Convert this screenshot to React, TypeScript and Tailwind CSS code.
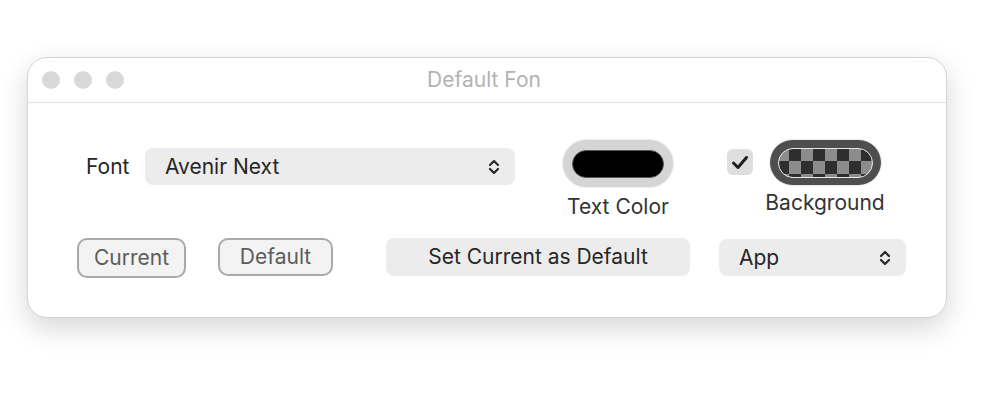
import React from 'react'

// Up/down chevron used by the macOS popup buttons
function Chevrons() {
  return (
    <svg width="12" height="18" viewBox="0 0 12 18" fill="none" className="shrink-0">
      <path d="M2 7 L6 3 L10 7" stroke="#2b2b2b" strokeWidth="2.2" strokeLinecap="round" strokeLinejoin="round" />
      <path d="M2 11 L6 15 L10 11" stroke="#2b2b2b" strokeWidth="2.2" strokeLinecap="round" strokeLinejoin="round" />
    </svg>
  )
}

function Popup({ label, className }: { label: string; className: string }) {
  return (
    <div
      className={`flex items-center justify-between rounded-[8px] bg-[#ececec] pl-[20px] pr-[15px] text-[21px] text-[#262626] ${className}`}
    >
      <span>{label}</span>
      <Chevrons />
    </div>
  )
}

function TrafficLights() {
  return (
    <div className="flex gap-[14px]">
      <span className="h-[18px] w-[18px] rounded-full bg-[#d9d9d9]" />
      <span className="h-[18px] w-[18px] rounded-full bg-[#d9d9d9]" />
      <span className="h-[18px] w-[18px] rounded-full bg-[#d9d9d9]" />
    </div>
  )
}

export default function App() {
  return (
    <div className="min-h-[400px] bg-white pt-[57px] pl-[27px] font-['Inter',sans-serif]">
      <div className="flex h-[261px] w-[920px] flex-col rounded-[20px] border border-[#d4d4d4] bg-white shadow-[0_10px_28px_rgba(0,0,0,0.16)]">
        {/* title bar */}
        <div className="relative flex h-[45px] shrink-0 items-center border-b border-[#e4e4e4] pl-[14px]">
          <TrafficLights />
          <div className="absolute inset-0 flex items-center justify-center pr-[6px] text-[21px] text-[#b3b3b3]">
            Default Fon
          </div>
        </div>

        {/* first row */}
        <div className="flex h-[135px] shrink-0 items-start pt-[37px] pl-[58px]">
          <div className="mt-[8px] flex h-[37px] items-center">
            <span className="w-[59px] text-[21px] text-[#262626]">Font</span>
            <Popup label="Avenir Next" className="h-[37px] w-[370px]" />
          </div>

          <div className="ml-[48px] flex w-[110px] flex-col items-center">
            <div className="flex h-[47px] w-[110px] items-center justify-center rounded-full bg-[#d5d5d5] shadow-[0_0_0_1px_#ececec]">
              <div className="h-[28px] w-[92px] rounded-full border border-[#5a5a5a] bg-black" />
            </div>
            <span className="mt-[9px] text-[21px] leading-[22px] text-[#333333] whitespace-nowrap">Text Color</span>
          </div>

          <div className="mt-[9px] ml-[54px] flex h-[26px] w-[26px] items-center justify-center rounded-[6px] bg-[#dedede]">
            <svg width="20" height="17" viewBox="0 0 20 17" fill="none">
              <path d="M3.5 9 L8 13.5 L16.5 3.5" stroke="#1f1f1f" strokeWidth="3" strokeLinecap="round" strokeLinejoin="round" />
            </svg>
          </div>

          <div className="ml-[13px] flex w-[118px] flex-col items-center">
            <div className="flex h-[45px] w-[111px] items-center justify-center rounded-full bg-[#4e4e4e] shadow-[0_0_0_1px_#ececec]">
              <div className="h-[30px] w-[95px] rounded-full border-[1.5px] border-[#e8e8e8] bg-[#8c8c8c] bg-[conic-gradient(#2e2e2e_25%,#8c8c8c_0_50%,#2e2e2e_0_75%,#8c8c8c_0)] bg-[length:24px_26px] bg-[position:-2px_-1px]" />
            </div>
            <span className="mt-[7px] text-[21px] leading-[22px] text-[#333333] whitespace-nowrap">Background</span>
          </div>
        </div>

        {/* second row */}
        <div className="flex items-start pl-[49px]">
          <button className="flex h-[40px] w-[109px] items-center justify-center rounded-[10px] border-2 border-[#a9a9a9] bg-[#f3f3f3] text-[21px] text-[#5c5c5c]">
            Current
          </button>
          <button className="ml-[32px] flex h-[38px] w-[115px] items-center justify-center rounded-[10px] border-2 border-[#a9a9a9] bg-[#f3f3f3] text-[21px] text-[#5c5c5c]">
            Default
          </button>
          <button className="ml-[53px] flex h-[38px] w-[304px] items-center justify-center rounded-[8px] bg-[#ececec] text-[21px] text-[#262626]">
            Set Current as Default
          </button>
          <Popup label="App" className="mt-[1px] ml-[29px] h-[37px] w-[187px]" />
        </div>
      </div>
    </div>
  )
}
